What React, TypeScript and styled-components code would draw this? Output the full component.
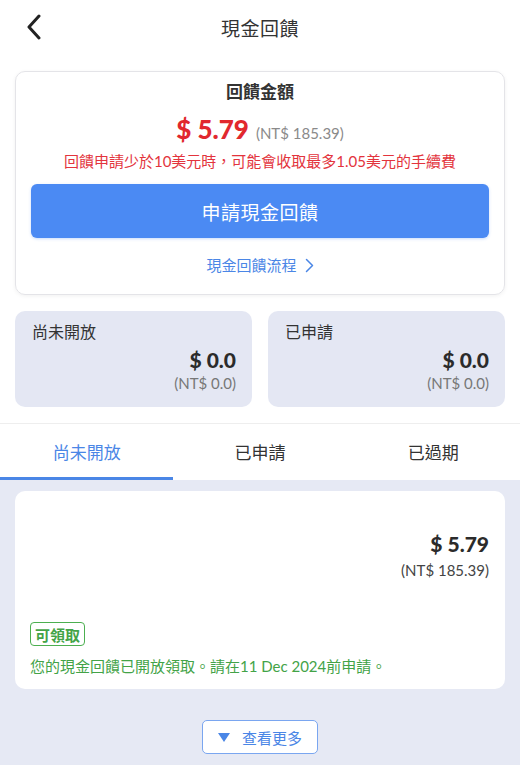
import * as React from 'react';
import styled, {createGlobalStyle} from 'styled-components';

const GlobalStyle = createGlobalStyle`
  html, body {
    margin: 0;
    padding: 0;
    background: #e6e9f4;
  }
  body {
    font-family: "Lato", "Noto Sans CJK TC", sans-serif;
    color: #333;
  }
`;

const Page = styled.div`
  width: 520px;
  min-height: 765px;
  background: #e6e9f4;
`;

const Top = styled.div`
  background: #ffffff;
  padding-bottom: 16px;
`;

const Header = styled.header`
  position: relative;
  height: 54px;
  display: flex;
  align-items: center;
  justify-content: center;
  margin-bottom: 17px;
`;

const BackButton = styled.button`
  position: absolute;
  left: 20px;
  top: 11px;
  width: 28px;
  height: 32px;
  padding: 0;
  border: none;
  background: none;
  display: flex;
  align-items: center;
  justify-content: center;
`;

const Title = styled.h1`
  margin: 0;
  font-size: 19px;
  font-weight: 400;
  color: #333;
  letter-spacing: 0.5px;
`;

const SummaryCard = styled.section`
  margin: 0 15px;
  padding: 8px 15px 19px;
  border: 1px solid #e4e4e8;
  border-radius: 10px;
  box-shadow: 0 1px 4px rgba(0, 0, 0, 0.06);
  display: flex;
  flex-direction: column;
  align-items: center;
`;

const SummaryTitle = styled.div`
  font-size: 17px;
  line-height: 24px;
  font-weight: 700;
  color: #333;
`;

const AmountRow = styled.div`
  margin-top: 9px;
  height: 32px;
  display: flex;
  align-items: baseline;
  gap: 7px;
`;

const BigAmount = styled.span`
  font-size: 26px;
  font-weight: 900;
  color: #e1282e;
  line-height: 32px;
`;

const SubAmount = styled.span`
  font-size: 15px;
  color: #8a8a8a;
`;

const Note = styled.div`
  margin-top: 6px;
  font-size: 15px;
  line-height: 20px;
  color: #e3343d;
`;

const PrimaryButton = styled.button`
  margin-top: 13px;
  width: 100%;
  height: 54px;
  border: none;
  border-radius: 6px;
  background: #4b8af3;
  color: #ffffff;
  font-family: inherit;
  font-size: 19px;
  letter-spacing: 0.5px;
  box-shadow: 0 1px 3px rgba(75, 138, 243, 0.3);
`;

const FlowLink = styled.a`
  margin-top: 17px;
  display: flex;
  align-items: center;
  gap: 8px;
  font-size: 15px;
  line-height: 20px;
  color: #4a86e6;
  text-decoration: none;
`;

const StatRow = styled.div`
  margin: 16px 15px 0;
  display: grid;
  grid-template-columns: 1fr 1fr;
  gap: 16px;
`;

const StatCard = styled.div`
  height: 96px;
  box-sizing: border-box;
  padding: 10px 16px 12px 17px;
  background: #e4e7f3;
  border-radius: 10px;
  display: flex;
  flex-direction: column;
`;

const StatLabel = styled.div`
  font-size: 16px;
  line-height: 22px;
  color: #333;
`;

const StatValue = styled.div`
  margin-top: 4px;
  text-align: right;
  font-size: 21px;
  line-height: 26px;
  font-weight: 900;
  color: #2b2b2b;
`;

const StatSub = styled.div`
  text-align: right;
  font-size: 15px;
  line-height: 20px;
  color: #777;
`;

const Tabs = styled.nav`
  display: grid;
  grid-template-columns: repeat(3, 1fr);
  height: 56px;
  background: #ffffff;
  border-top: 1px solid #eeeeee;
`;

const Tab = styled.div<{ $active?: boolean }>`
  display: flex;
  align-items: center;
  justify-content: center;
  padding-bottom: 2px;
  font-size: 17px;
  color: ${p => (p.$active ? '#4a86e6' : '#333')};
  box-shadow: ${p => (p.$active ? 'inset 0 -3px 0 #4a86e6' : 'none')};
`;

const List = styled.div`
  padding: 11px 15px 12px;
  display: flex;
  flex-direction: column;
  align-items: center;
`;

const ItemCard = styled.div`
  width: 100%;
  height: 198px;
  box-sizing: border-box;
  padding: 40px 16px 13px 15px;
  background: #ffffff;
  border-radius: 10px;
  display: flex;
  flex-direction: column;
`;

const ItemAmount = styled.div`
  text-align: right;
  font-size: 21px;
  line-height: 26px;
  font-weight: 900;
  color: #2b2b2b;
`;

const ItemSub = styled.div`
  margin-top: 3px;
  text-align: right;
  font-size: 15px;
  line-height: 20px;
  color: #444;
`;

const Badge = styled.span`
  margin-top: auto;
  align-self: flex-start;
  height: 24px;
  box-sizing: border-box;
  padding: 0 4px;
  display: flex;
  align-items: center;
  border: 1.5px solid #4caf50;
  border-radius: 4px;
  font-size: 15px;
  font-weight: 700;
  color: #43a347;
`;

const ItemNote = styled.div`
  margin-top: 10px;
  font-size: 15px;
  line-height: 20px;
  color: #43a347;
`;

const MoreButton = styled.button`
  margin-top: 31px;
  width: 116px;
  height: 34px;
  display: flex;
  align-items: center;
  justify-content: center;
  gap: 12px;
  background: #ffffff;
  border: 1px solid #7aa6f0;
  border-radius: 5px;
  font-family: inherit;
  font-size: 15px;
  color: #4a86e6;
  padding: 0;
`;

const BackIcon = () => (
  <svg width="18" height="26" viewBox="0 0 18 26">
    <polyline points="14,2 4,13 14,24" fill="none" stroke="#222" strokeWidth="3" strokeLinecap="round" strokeLinejoin="round" />
  </svg>
);

const ChevronRight = () => (
  <svg width="9" height="15" viewBox="0 0 9 15">
    <polyline points="1.5,1.5 7.5,7.5 1.5,13.5" fill="none" stroke="#4a86e6" strokeWidth="1.5" strokeLinecap="round" strokeLinejoin="round" />
  </svg>
);

const TriangleDown = () => (
  <svg width="12" height="9" viewBox="0 0 12 9">
    <polygon points="0,0 12,0 6,9" fill="#4a86e6" />
  </svg>
);

const stats = [
  {label: '尚未開放', value: '$ 0.0', sub: '(NT$ 0.0)'},
  {label: '已申請', value: '$ 0.0', sub: '(NT$ 0.0)'},
];

const tabs = ['尚未開放', '已申請', '已過期'];

export default function App() {
  return <Page>
    <GlobalStyle />
    <Top>
      <Header>
        <BackButton type="button"><BackIcon /></BackButton>
        <Title>現金回饋</Title>
      </Header>

      <SummaryCard>
        <SummaryTitle>回饋金額</SummaryTitle>
        <AmountRow>
          <BigAmount>$ 5.79</BigAmount>
          <SubAmount>(NT$ 185.39)</SubAmount>
        </AmountRow>
        <Note>回饋申請少於10美元時，可能會收取最多1.05美元的手續費</Note>
        <PrimaryButton type="button">申請現金回饋</PrimaryButton>
        <FlowLink>現金回饋流程 <ChevronRight /></FlowLink>
      </SummaryCard>

      <StatRow>
        {stats.map(s => <StatCard key={s.label}>
          <StatLabel>{s.label}</StatLabel>
          <StatValue>{s.value}</StatValue>
          <StatSub>{s.sub}</StatSub>
        </StatCard>)}
      </StatRow>
    </Top>

    <Tabs>
      {tabs.map((t, i) => <Tab key={t} $active={i === 0}>{t}</Tab>)}
    </Tabs>

    <List>
      <ItemCard>
        <ItemAmount>$ 5.79</ItemAmount>
        <ItemSub>(NT$ 185.39)</ItemSub>
        <Badge>可領取</Badge>
        <ItemNote>您的現金回饋已開放領取。請在11 Dec 2024前申請。</ItemNote>
      </ItemCard>
      <MoreButton type="button"><TriangleDown />查看更多</MoreButton>
    </List>
  </Page>;
}
